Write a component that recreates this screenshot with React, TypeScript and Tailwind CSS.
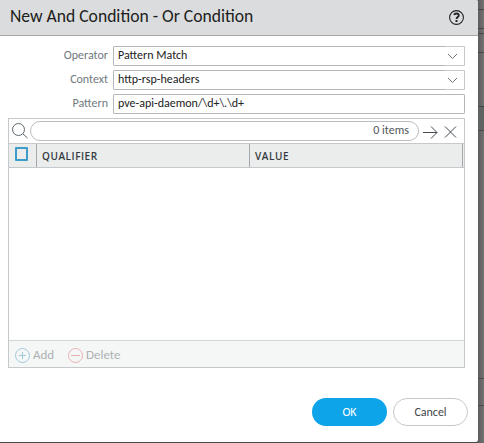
import React from "react";

function Chevron() {
  return (
    <svg width="20" height="20" viewBox="0 0 20 20" fill="none" className="-my-px -mr-px shrink-0">
      <path d="M0 .5H18.5L19.5 1.5V18.5L18.5 19.5H0" stroke="#c6cacc" />
      <path d="M3 8L7.5 12.5L12 8" stroke="#6d767b" />
    </svg>
  );
}

function Field({ label, value, select }: { label: string; value: string; select?: boolean }) {
  return (
    <div className="flex h-5 items-center">
      <label className="w-[108px] shrink-0 pb-0.5 text-right text-[12px] leading-[18px] text-[#707a80]">{label}</label>
      <div className="ml-[5px] flex h-5 w-[352px] items-center justify-between rounded-[1px] border border-[#b5b8ba] pl-1 text-[12px] leading-[18px] text-[#222]">
        <span className="pb-0.5 whitespace-pre">{value}</span>
        {select && <Chevron />}
      </div>
    </div>
  );
}

function Backdrop() {
  return (
    <div className="flex h-[443px] w-[6px] flex-col bg-linear-to-r from-[#5c5c5c] to-[#737373]">
      <div className="h-[10px] border-b border-[#454545]" />
      <div className="h-[19px] border-b border-[#454545]" />
      <div className="h-[5px] border-b border-[#454545]" />
      <div className="h-[19px] border-b border-[#454545]" />
      <div className="h-[54px] border-b border-[#454545]" />
      <div className="h-[24px] border-b border-[#4a4a4a] bg-[#5f6463]" />
      <div className="h-[248px] border-b border-[#4b4b4b]" />
      <div className="h-[27px] border-b border-[#4b4b4b]" />
    </div>
  );
}

export default function App() {
  return (
    <div className="flex h-[443px] w-[484px] overflow-hidden bg-[#4b4848] font-['Carlito','Lato',sans-serif]">
      <div className="flex h-[442px] w-[478px] flex-col overflow-hidden rounded-r-[2px] bg-white">
        <header className="flex h-9 shrink-0 items-center justify-between border-b border-[#a5a6a8] bg-[#dbdcde] pr-[13px] pl-[10px]">
          <h1 className="pb-[3px] text-[17.6px] leading-5 whitespace-nowrap text-[#1c1e20]">New And Condition - Or Condition</h1>
          <svg width="16" height="16" viewBox="0 0 16 16" fill="none">
            <circle cx="7.5" cy="7.5" r="6.9" stroke="#222" strokeWidth="1.1" />
            <path d="M5.1 5.1C5.4 4 6.3 3.5 7.5 3.5C8.9 3.5 9.8 4.3 9.8 5.5C9.8 7 7.5 7.2 7.5 9" stroke="#222" strokeWidth="1.8" />
            <path d="M7.5 10V11.9" stroke="#222" strokeWidth="2" />
          </svg>
        </header>
        <form className="mt-[10px] flex flex-col gap-1">
          <Field label="Operator" value="Pattern Match" select />
          <Field label="Context" value="http-rsp-headers" select />
          <Field label="Pattern" value="pve-api-daemon/\d+\.\d+" />
        </form>
        <section className="mt-1 ml-2 flex h-[250px] w-[457px] flex-col border border-[#c6c9cb]">
          <div className="flex h-6 shrink-0 items-start pt-[2px]">
            <svg width="21" height="20" viewBox="0 0 21 20" fill="none" stroke="#60686d" className="shrink-0">
              <circle cx="9.5" cy="8.5" r="6" />
              <path d="M14 13L18.5 17" />
            </svg>
            <div className="flex h-5 w-[389px] items-center justify-end rounded-full border border-[#b9bcbe] pr-[9px] pb-0.5 text-[12px] text-[#50565a]">0 items</div>
            <svg width="44" height="20" viewBox="0 0 44 20" fill="none" stroke="#454b4f" className="shrink-0">
              <path d="M4 11.5H18M12 5.5L18 11.5L12 17.5M26 5.5L37 16.5M37 5.5L26 16.5" />
            </svg>
          </div>
          <div className="flex h-[25px] shrink-0 border-y border-[#c6c9cb] bg-[#ebeded] font-['Open_Sans',sans-serif] text-[10px] font-semibold tracking-[0.55px] text-[#343b40]">
            <div className="w-7 border-r border-[#a4a9ad] pt-[3px] pl-[6px]">
              <div className="h-[14px] w-[13px] rounded-[1px] border-2 border-[#3d9cc8]" />
            </div>
            <div className="flex w-[213px] items-center border-r border-[#a4a9ad] pt-px pl-[5px]">QUALIFIER</div>
            <div className="flex w-[213px] items-center border-r border-[#a4a9ad] pt-px pl-[5px]">VALUE</div>
          </div>
          <div className="flex-1" />
          <footer className="flex h-[27px] shrink-0 items-center border-t border-[#d2d5d6] bg-[#f5f7f7] pl-[6px] text-[13px] text-[#adb1b3]">
            <svg width="15" height="15" viewBox="0 0 15 15" fill="none" stroke="#a1c8da" className="mt-[3px]">
              <circle cx="7.5" cy="7.5" r="7" />
              <path d="M4 7.5H11M7.5 4V11" />
            </svg>
            <span className="mt-0.5 ml-[3px] w-[35px]">Add</span>
            <svg width="15" height="15" viewBox="0 0 15 15" fill="none" stroke="#e6b1b3" className="mt-[3px]">
              <circle cx="7.5" cy="7.5" r="7" />
              <path d="M3 7.5H12" />
            </svg>
            <span className="mt-0.5 ml-[3px]">Delete</span>
          </footer>
        </section>
        <div className="mt-[30px] flex justify-end gap-[6px] pr-[10px] text-[12px]">
          <button className="h-7 w-[75px] rounded-full bg-[#0ea4e9] text-white">OK</button>
          <button className="h-7 w-[75px] rounded-full border border-[#c5c8ca] text-[#3f464a]">Cancel</button>
        </div>
      </div>
      <Backdrop />
    </div>
  );
}
